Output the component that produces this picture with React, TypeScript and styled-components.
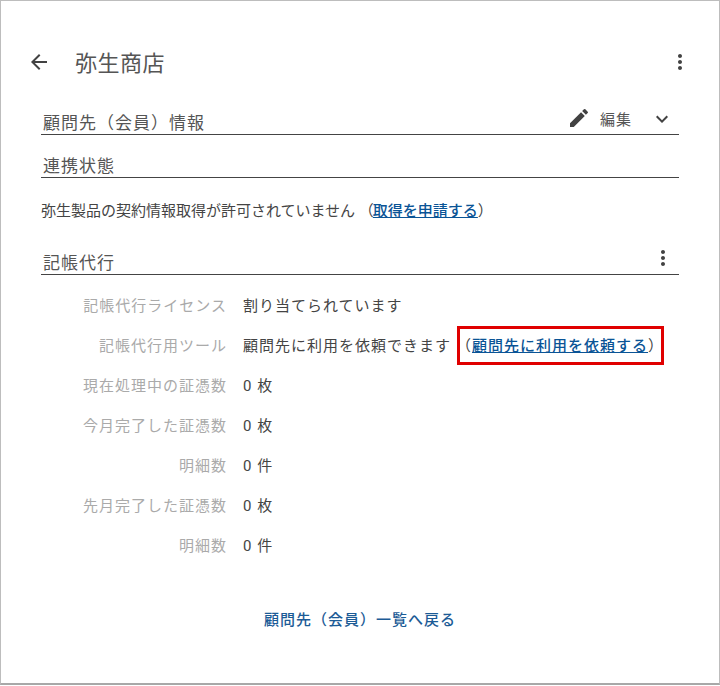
import React, { FC } from 'react'
import styled, { createGlobalStyle } from 'styled-components'

const GlobalStyle = createGlobalStyle`
	html, body {
		margin: 0;
		padding: 0;
		background: #fff;
	}
	body {
		font-family: Roboto, 'Noto Sans CJK JP', sans-serif;
	}
`

const Frame = styled.div`
	box-sizing: border-box;
	width: 720px;
	height: 685px;
	background: #fff;
	border: 1px solid #bdbdbd;
	border-bottom: 2px solid #a8a8a8;
	padding: 0 40px 0 40px;
`

const Header = styled.div`
	display: flex;
	align-items: center;
	height: 40px;
	margin: 41px 0 0 -14px;
`

const BackButton = styled.div`
	width: 24px;
	height: 24px;
	margin-right: 24px;
	color: #424242;
`

const Title = styled.h1`
	flex: 1;
	margin: 0 0 2px;
	font-size: 22px;
	font-weight: 400;
	letter-spacing: 0.5px;
	color: #555;
`

const IconBox = styled.div<{ $shift?: number; $drop?: number }>`
	display: flex;
	align-items: center;
	justify-content: center;
	width: 24px;
	height: 24px;
	margin-top: ${p => p.$drop ?? 0}px;
	margin-right: ${p => p.$shift ?? 0}px;
	color: #424242;
`

const SectionHead = styled.div<{ $top: number }>`
	display: flex;
	align-items: flex-end;
	justify-content: space-between;
	height: 28px;
	margin-top: ${p => p.$top}px;
	padding-left: 2px;
	border-bottom: 1px solid #444;
`

const SectionTitle = styled.h2`
	margin: 0;
	font-size: 17px;
	line-height: 22px;
	font-weight: 400;
	letter-spacing: 1px;
	color: #555;
`

const Actions = styled.div`
	display: flex;
	align-items: center;
	height: 28px;
	margin-bottom: 2px;
`

const EditLabel = styled.span`
	font-size: 15px;
	letter-spacing: 1px;
	color: #555;
	margin: 0 18px 0 9px;
`

const Notice = styled.p`
	margin: 23px 0 0;
	font-size: 15px;
	line-height: 20px;
	color: #444;
`

const Link = styled.a`
	color: #0a5496;
	font-weight: 500;
	text-decoration: underline;
`

const NoticeLink = styled(Link)`
	margin-left: -1px;
`

const Rows = styled.dl`
	margin: 9px 0 0;
	display: grid;
	grid-template-columns: 186px 1fr;
	grid-auto-rows: 40px;
	column-gap: 16px;
	align-items: center;
`

const Label = styled.dt`
	text-align: right;
	font-size: 15px;
	letter-spacing: 1px;
	color: #aaa;
`

const Value = styled.dd`
	margin: 0;
	font-size: 15px;
	letter-spacing: 1px;
	color: #444;
`

const Highlight = styled.span`
	position: relative;
	margin-left: 5px;

	&::after {
		content: '';
		position: absolute;
		left: 1px;
		right: 0;
		top: -11px;
		bottom: -10px;
		border: 3px solid #e00000;
	}
`

const Footer = styled.div`
	margin-top: 44px;
	text-align: center;
`

const BackLink = styled.a`
	font-size: 15px;
	font-weight: 500;
	letter-spacing: 1px;
	color: #1c5b96;
`

const DotsIcon: FC = () => (
	<svg width='24' height='24' viewBox='0 0 24 24' fill='currentColor'>
		<path d='M12 8c1.1 0 2-.9 2-2s-.9-2-2-2-2 .9-2 2 .9 2 2 2zm0 2c-1.1 0-2 .9-2 2s.9 2 2 2 2-.9 2-2-.9-2-2-2zm0 6c-1.1 0-2 .9-2 2s.9 2 2 2 2-.9 2-2-.9-2-2-2z' />
	</svg>
)

const rows: [string, string][] = [
	['現在処理中の証憑数', '0 枚'],
	['今月完了した証憑数', '0 枚'],
	['明細数', '0 件'],
	['先月完了した証憑数', '0 枚'],
	['明細数', '0 件'],
]

const App: FC = () => (
	<>
		<GlobalStyle />
		<Frame>
			<Header>
				<BackButton>
					<svg width='24' height='24' viewBox='0 0 24 24' fill='currentColor'>
						<path d='M20 11H7.83l5.59-5.59L12 4l-8 8 8 8 1.41-1.41L7.83 13H20v-2z' />
					</svg>
				</BackButton>
				<Title>弥生商店</Title>
				<IconBox $shift={-13}>
					<DotsIcon />
				</IconBox>
			</Header>

			<SectionHead $top={24}>
				<SectionTitle>顧問先（会員）情報</SectionTitle>
				<Actions>
					<IconBox>
						<svg width='24' height='24' viewBox='0 0 24 24' fill='currentColor'>
							<path d='M3 17.25V21h3.75L17.81 9.94l-3.75-3.75L3 17.25zM20.71 7.04a1 1 0 0 0 0-1.41l-2.34-2.34a1 1 0 0 0-1.41 0l-1.83 1.83 3.75 3.75 1.83-1.83z' />
						</svg>
					</IconBox>
					<EditLabel>編集</EditLabel>
					<IconBox $shift={5} $drop={2}>
						<svg width='24' height='24' viewBox='0 0 24 24' fill='currentColor'>
							<path d='M7.41 8.59 12 13.17l4.59-4.58L18 10l-6 6-6-6z' />
						</svg>
					</IconBox>
				</Actions>
			</SectionHead>

			<SectionHead $top={14}>
				<SectionTitle>連携状態</SectionTitle>
			</SectionHead>

			<Notice>
				弥生製品の契約情報取得が許可されていません （<NoticeLink>取得を申請する</NoticeLink>）
			</Notice>

			<SectionHead $top={25}>
				<SectionTitle>記帳代行</SectionTitle>
				<Actions>
					<IconBox $shift={4}>
						<DotsIcon />
					</IconBox>
				</Actions>
			</SectionHead>

			<Rows>
				<Label>記帳代行ライセンス</Label>
				<Value>割り当てられています</Value>
				<Label>記帳代行用ツール</Label>
				<Value>
					顧問先に利用を依頼できます
					<Highlight>
						（<Link>顧問先に利用を依頼する</Link>）
					</Highlight>
				</Value>
				{rows.map(([label, value], i) => (
					<React.Fragment key={i}>
						<Label>{label}</Label>
						<Value>{value}</Value>
					</React.Fragment>
				))}
			</Rows>

			<Footer>
				<BackLink>顧問先（会員）一覧へ戻る</BackLink>
			</Footer>
		</Frame>
	</>
)

export default App
